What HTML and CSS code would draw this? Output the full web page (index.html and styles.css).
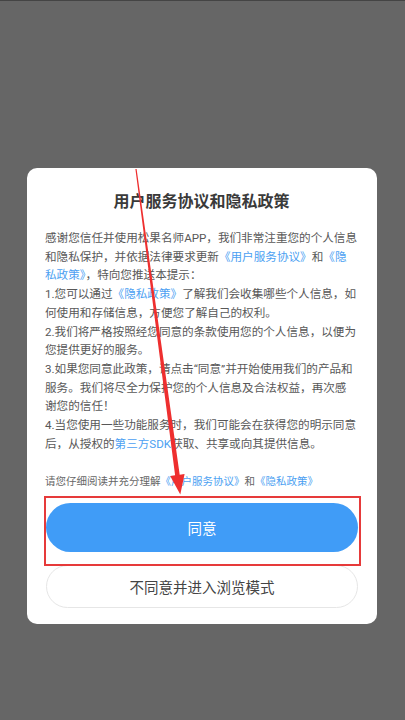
FILE: index.html
```html
<!DOCTYPE html>
<html lang="zh-CN">
<head>
<meta charset="utf-8">
<title>用户服务协议和隐私政策</title>
<link rel="stylesheet" href="styles.css">
</head>
<body>
<div class="screen">
  <div class="card">
    <h1 class="title">用户服务协议和隐私政策</h1>
    <div class="body">
      <div class="line">感谢您信任并使用松果名师APP，我们非常注重您的个人信息</div>
      <div class="line">和隐私保护，并依据法律要求更新<span class="link">《用户服务协议》</span>和<span class="link">《隐</span></div>
      <div class="line"><span class="link">私政策》</span>，特向您推送本提示：</div>
      <div class="line">1.您可以通过<span class="link">《隐私政策》</span>了解我们会收集哪些个人信息，如</div>
      <div class="line">何使用和存储信息，方便您了解自己的权利。</div>
      <div class="line">2.我们将严格按照经您同意的条款使用您的个人信息，以便为</div>
      <div class="line">您提供更好的服务。</div>
      <div class="line">3.如果您同意此政策，请点击“同意”并开始使用我们的产品和</div>
      <div class="line">服务。我们将尽全力保护您的个人信息及合法权益，再次感</div>
      <div class="line">谢您的信任！</div>
      <div class="line">4.当您使用一些功能服务时，我们可能会在获得您的明示同意</div>
      <div class="line">后，从授权的<span class="link">第三方SDK</span>获取、共享或向其提供信息。</div>
    </div>
    <div class="note">请您仔细阅读并充分理解<span class="link">《用户服务协议》</span>和<span class="link">《隐私政策》</span></div>
    <button class="btn btn-agree">同意</button>
    <button class="btn btn-decline">不同意并进入浏览模式</button>
  </div>
  <div class="highlight"></div>
  <svg class="arrow" width="405" height="720" viewBox="0 0 405 720" aria-hidden="true">
    <polygon points="135.4,168.1 136.6,167.9 179.7,473.7 184.6,473.1 180.3,493.5 170.2,474.9 175.1,474.3" fill="#ee2f2f"/>
  </svg>
</div>
</body>
</html>
```
FILE: styles.css
```css
* { box-sizing: border-box; }
html, body { margin: 0; padding: 0; }
body {
  font-family: Roboto, "Noto Sans CJK SC", sans-serif;
  background: #666666;
}
.screen {
  position: relative;
  width: 405px;
  height: 720px;
  background: #666666;
  border-top: 1px solid #444444;
  padding-top: 167px;
  overflow: hidden;
}
.card {
  width: 350px;
  margin-left: 27px;
  background: #ffffff;
  border-radius: 10px;
  padding: 22px 19px 16px 18px;
  display: flex;
  flex-direction: column;
}
.title {
  margin: 0;
  font-size: 16px;
  line-height: 24px;
  font-weight: 700;
  color: #3a3a3a;
  text-align: center;
}
.body {
  margin-top: 15px;
  font-size: 11.6px;
  line-height: 18.7px;
  color: #585858;
}
.line { white-space: nowrap; }
.link { color: #4c9ff2; }
.note {
  margin-top: 20.6px;
  font-size: 10.5px;
  line-height: 16px;
  color: #666666;
  white-space: nowrap;
}
.btn {
  display: block;
  width: 312px;
  margin-left: 1px;
  border-radius: 999px;
  font-family: inherit;
  font-size: 14.5px;
  padding: 0;
  cursor: pointer;
}
.btn-agree {
  margin-top: 13px;
  height: 49px;
  background: #409cf7;
  color: #ffffff;
  border: none;
}
.btn-decline {
  margin-top: 13px;
  height: 43px;
  background: #ffffff;
  color: #444444;
  border: 1px solid #e6e6e6;
}
.highlight {
  position: absolute;
  left: 44px;
  top: 495px;
  width: 317px;
  height: 70px;
  border: 2px solid #e63a3a;
}
.arrow {
  position: absolute;
  left: 0;
  top: 0;
  pointer-events: none;
}
```
